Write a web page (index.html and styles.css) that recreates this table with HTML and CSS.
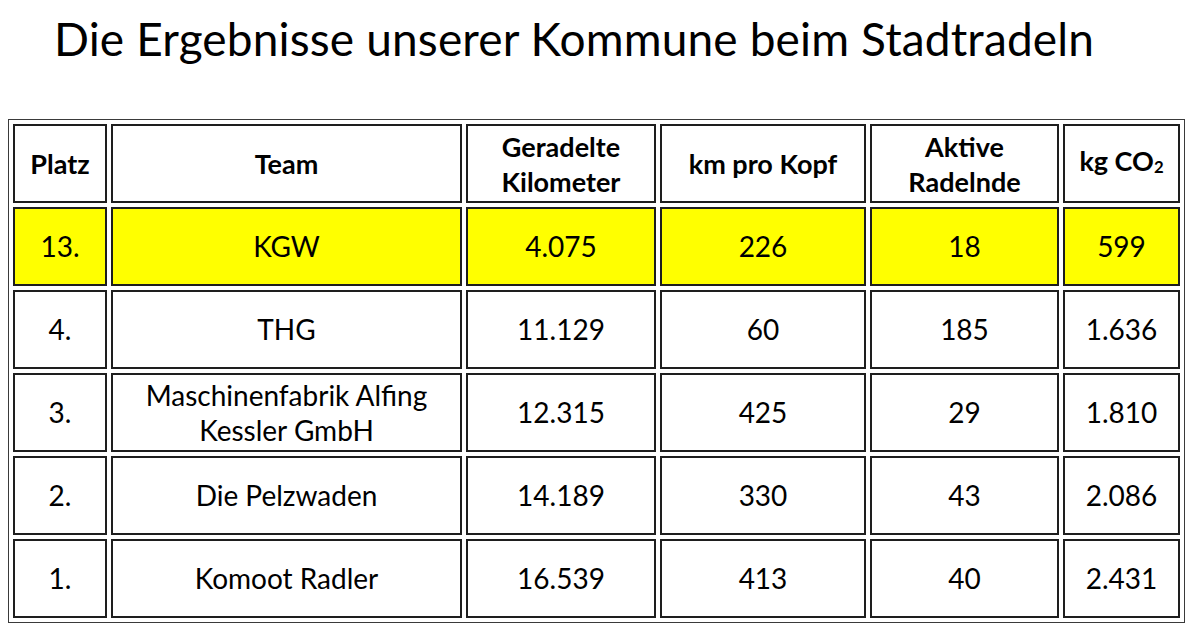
FILE: index.html
```html
<!DOCTYPE html>
<html lang="de">
<head>
<meta charset="utf-8">
<title>Stadtradeln Ergebnisse</title>
<link rel="stylesheet" href="styles.css">
</head>
<body>
<h1 class="title">Die Ergebnisse unserer Kommune beim Stadtradeln</h1>
<table class="results">
  <colgroup>
    <col class="c-platz">
    <col class="c-team">
    <col class="c-km">
    <col class="c-kopf">
    <col class="c-aktiv">
    <col class="c-co2">
  </colgroup>
  <thead>
    <tr>
      <th>Platz</th>
      <th>Team</th>
      <th>Geradelte<br>Kilometer</th>
      <th>km pro Kopf</th>
      <th>Aktive<br>Radelnde</th>
      <th>kg CO<span class="sub">2</span></th>
    </tr>
  </thead>
  <tbody>
    <tr class="highlight">
      <td>13.</td><td>KGW</td><td>4.075</td><td>226</td><td>18</td><td>599</td>
    </tr>
    <tr>
      <td>4.</td><td>THG</td><td>11.129</td><td>60</td><td>185</td><td>1.636</td>
    </tr>
    <tr>
      <td>3.</td><td>Maschinenfabrik Alfing<br>Kessler GmbH</td><td>12.315</td><td>425</td><td>29</td><td>1.810</td>
    </tr>
    <tr>
      <td>2.</td><td>Die Pelzwaden</td><td>14.189</td><td>330</td><td>43</td><td>2.086</td>
    </tr>
    <tr>
      <td>1.</td><td>Komoot Radler</td><td>16.539</td><td>413</td><td>40</td><td>2.431</td>
    </tr>
  </tbody>
</table>
</body>
</html>
```

FILE: styles.css
```css
html, body {
  margin: 0;
  padding: 0;
  background: #ffffff;
}

body {
  font-family: "Lato", "Open Sans", sans-serif;
  color: #000000;
  width: 1194px;
  height: 636px;
  overflow: hidden;
}

.title {
  margin: 0;
  padding: 11px 0 0 54px;
  font-size: 46px;
  line-height: 56px;
  font-weight: 400;
  letter-spacing: 0.15px;
  white-space: nowrap;
}

.results {
  margin: 52px 0 0 8px;
  width: 1177px;
  table-layout: fixed;
  border-collapse: separate;
  border-spacing: 4px;
  border: 1px solid #3a3a3a;
  font-size: 28px;
}

.c-platz { width: 94px; }
.c-team { width: 351px; }
.c-km { width: 190px; }
.c-kopf { width: 206px; }
.c-aktiv { width: 189px; }
.c-co2 { width: 117px; }

.results tr {
  height: 79px;
}

.results th,
.results td {
  box-sizing: border-box;
  border: 2px solid #1e1e1e;
  padding: 0 4px;
  text-align: center;
  vertical-align: middle;
  line-height: 35px;
}

.results th {
  font-weight: 700;
  font-size: 27px;
}

.results td {
  font-weight: 400;
}

.highlight td {
  background: #ffff00;
}

.sub {
  font-size: 0.62em;
  vertical-align: -0.12em;
}
```
